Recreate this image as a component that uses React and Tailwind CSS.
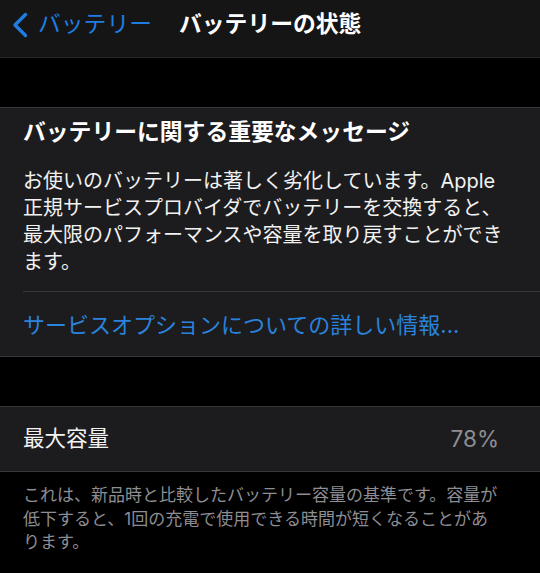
import React from "react";

const font = { fontFamily: 'Inter, "Noto Sans CJK JP", sans-serif' };

const ChevronLeft = () => (
  <svg width="18" height="26" viewBox="0 0 18 26" fill="none">
    <path
      d="M14.5 2.5 L4 13 L14.5 23.5"
      stroke="#1f7de2"
      strokeWidth="3.4"
      strokeLinecap="round"
      strokeLinejoin="round"
    />
  </svg>
);

const App = () => {
  return (
    <div className="w-[540px] h-[573px] bg-black overflow-hidden" style={font}>
      {/* nav bar */}
      <div className="h-[58px] bg-[#151515] border-b border-[#262626] flex items-center">
        <div className="ml-[11px] pb-[8px] flex items-center">
          <ChevronLeft />
        </div>
        <span className="ml-[9px] pb-[8px] text-[22.8px] text-[#1f7de2] leading-none">
          バッテリー
        </span>
        <span className="ml-[27px] pb-[8px] text-[22.8px] text-white font-bold leading-none">
          バッテリーの状態
        </span>
      </div>

      <div className="h-[49px]" />

      {/* message card */}
      <div className="bg-[#1c1c1e] border-y border-[#38383a]">
        <div className="pl-[23px] pt-[9px]">
          <p className="text-[22.8px] leading-[30px] font-bold text-white">
            バッテリーに関する重要なメッセージ
          </p>
          <p className="mt-[21px] text-[20px] leading-[27px] text-[#f2f2f2] whitespace-nowrap">
            <span className="block">お使いのバッテリーは著しく劣化しています。Apple</span>
            <span className="block">正規サービスプロバイダでバッテリーを交換すると、</span>
            <span className="block">最大限のパフォーマンスや容量を取り戻すことができ</span>
            <span className="block">ます。</span>
          </p>
          <div className="mt-[15px] border-t border-[#38383a]" />
          <div className="h-[64px] flex items-center pt-[2px]">
            <span className="text-[22px] text-[#2a83dc] leading-none">
              サービスオプションについての詳しい情報...
            </span>
          </div>
        </div>
      </div>

      <div className="h-[49px]" />

      {/* max capacity row */}
      <div className="bg-[#1c1c1e] border-y border-[#38383a] h-[66px] flex items-center justify-between pl-[23px] pr-[41px]">
        <span className="text-[21.5px] text-[#f2f2f2] leading-none">最大容量</span>
        <span className="text-[22.5px] text-[#8e8e93] leading-none">78%</span>
      </div>

      <p className="pl-[23px] pt-[12px] text-[17px] leading-[23.5px] text-[#8d8d93] whitespace-nowrap">
        <span className="block">これは、新品時と比較したバッテリー容量の基準です。容量が</span>
        <span className="block">低下すると、1回の充電で使用できる時間が短くなることがあ</span>
        <span className="block">ります。</span>
      </p>
    </div>
  );
};

export default App;
